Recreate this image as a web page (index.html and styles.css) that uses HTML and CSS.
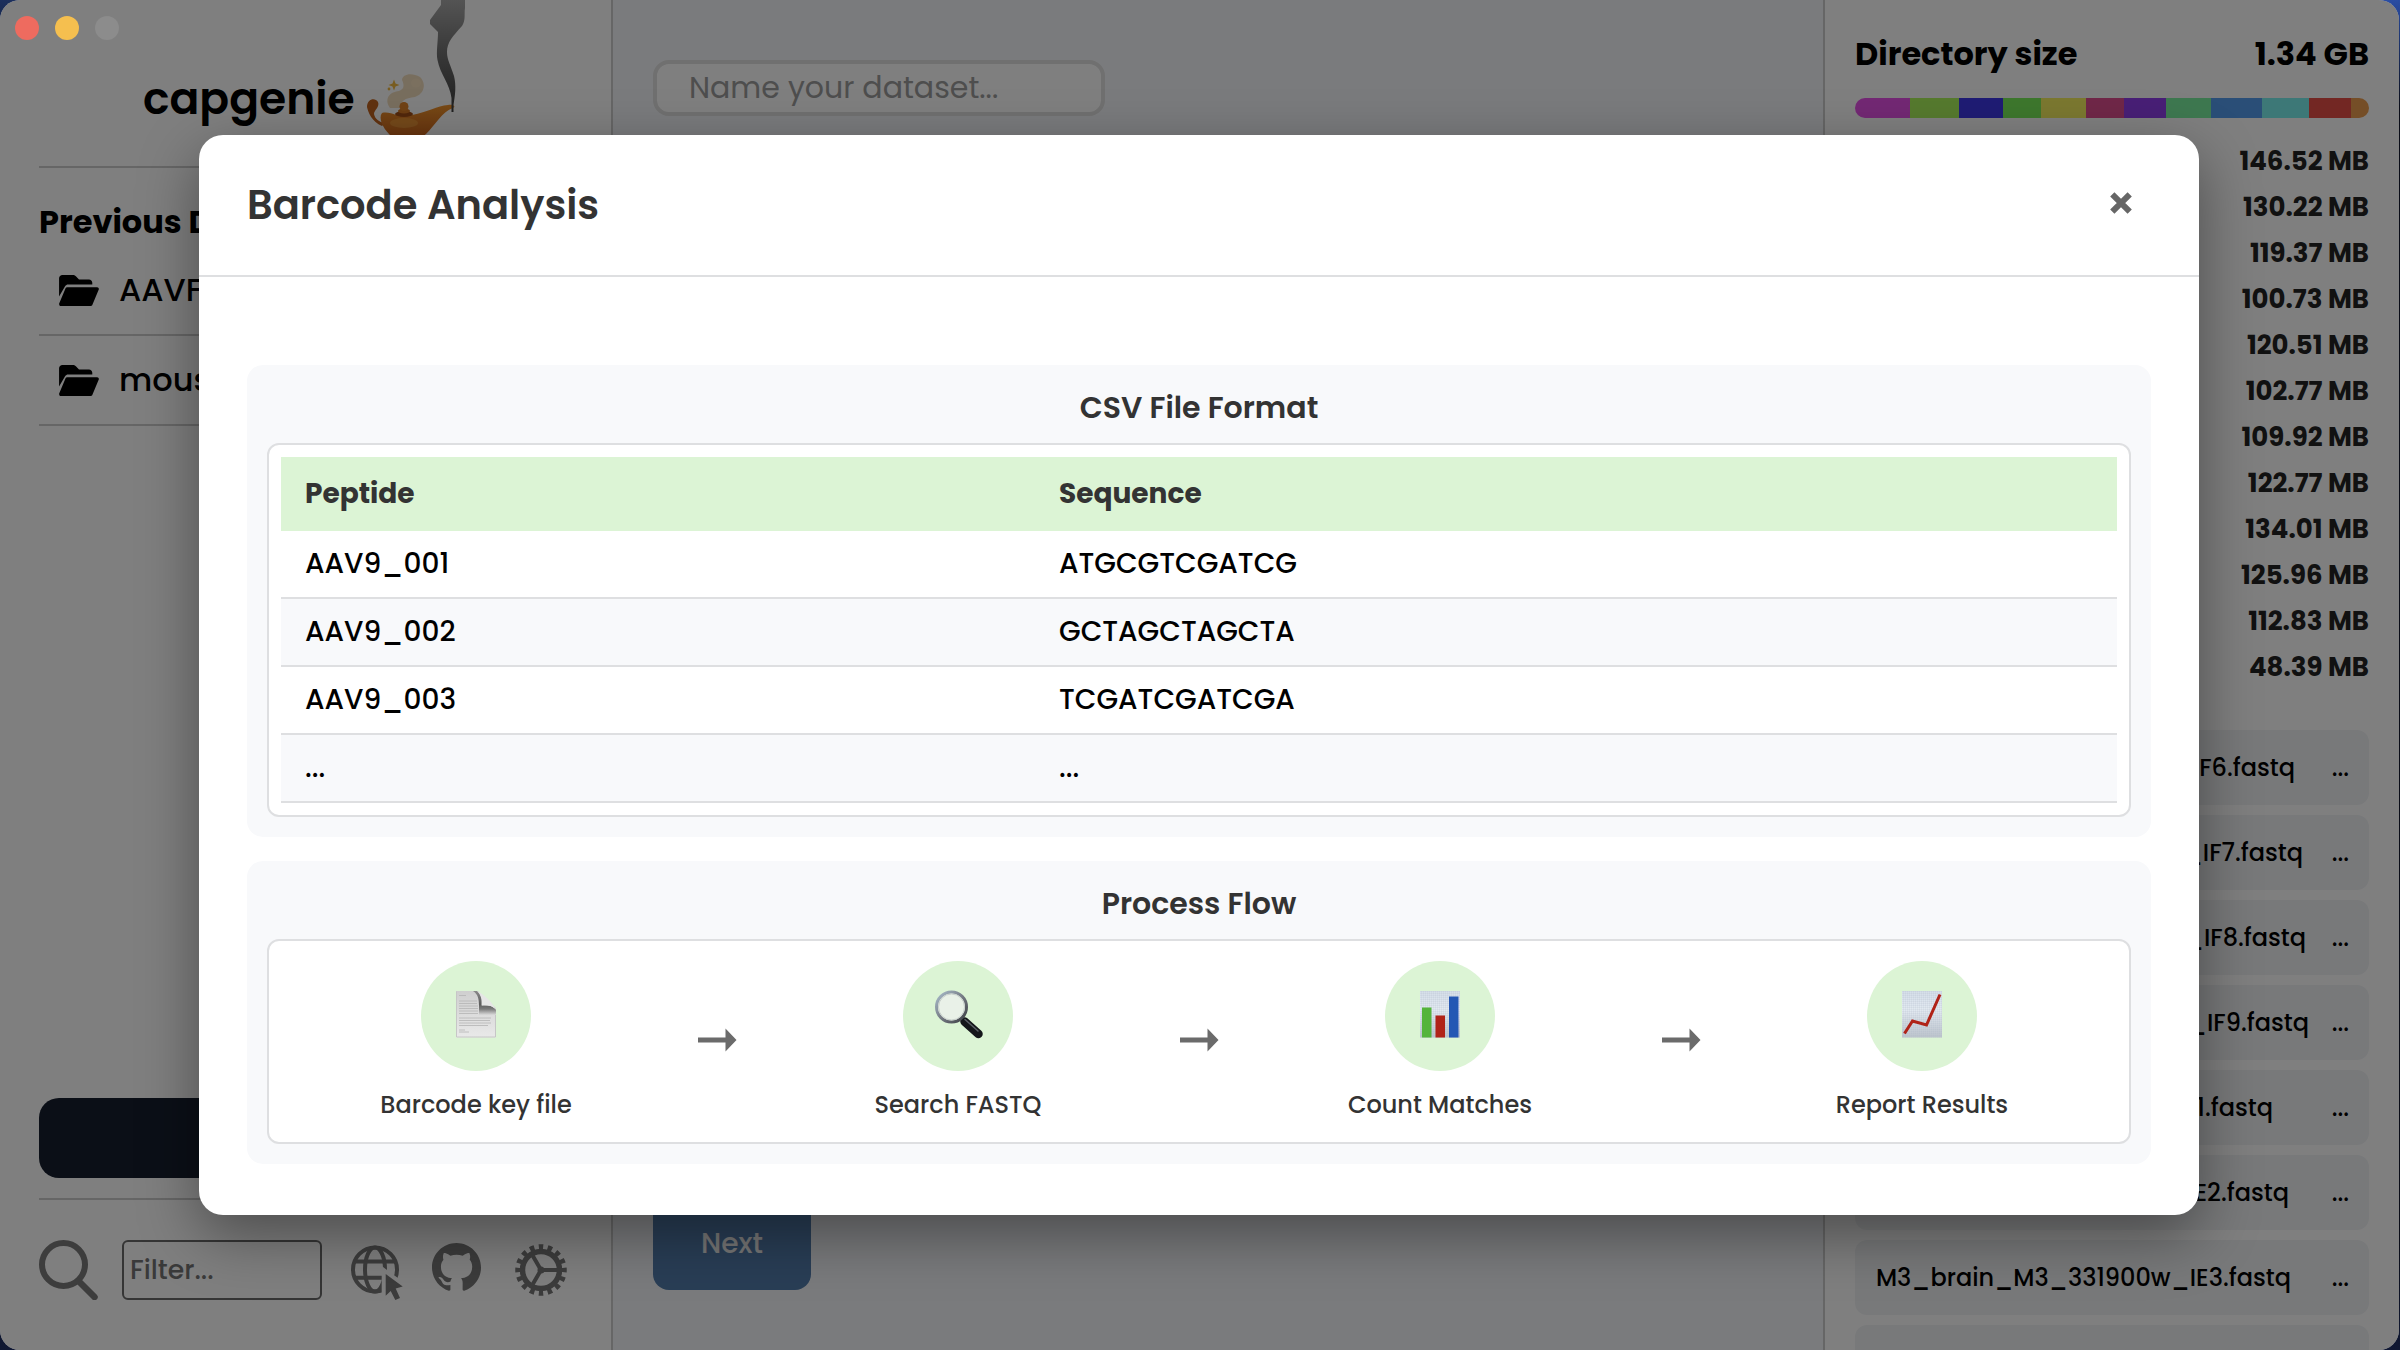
FILE: index.html
```html
<!DOCTYPE html>
<html lang="en">
<head>
<meta charset="utf-8">
<title>capgenie</title>
<link rel="stylesheet" href="styles.css">
</head>
<body>
<svg class="defs" width="0" height="0" aria-hidden="true">
  <defs>
    <linearGradient id="smoke" x1="0" y1="0" x2="0" y2="1"><stop offset="0" stop-color="#a8a8a8"/><stop offset=".5" stop-color="#6e6e6e"/><stop offset="1" stop-color="#404040"/></linearGradient>
    <linearGradient id="brass" x1="0" y1="0" x2="0" y2="1"><stop offset="0" stop-color="#f0942c"/><stop offset="1" stop-color="#c8601c"/></linearGradient>
    <linearGradient id="paper" x1="0" y1="0" x2="0" y2="1"><stop offset="0" stop-color="#d6dfea"/><stop offset=".4" stop-color="#e3eaf2"/><stop offset="1" stop-color="#bcc3cc"/></linearGradient>
    <linearGradient id="sheet" x1="0" y1="0" x2="0" y2="1"><stop offset="0" stop-color="#cfcfcf"/><stop offset="1" stop-color="#e9e9e9"/></linearGradient>
    <linearGradient id="curl" x1="0" y1="0" x2="0" y2="1"><stop offset="0" stop-color="#8a8a8a"/><stop offset=".55" stop-color="#5c5c5c"/><stop offset=".75" stop-color="#7a7a7a"/><stop offset="1" stop-color="#dcdcdc"/></linearGradient>
    <linearGradient id="rim" x1="0" y1="0" x2="1" y2="1"><stop offset="0" stop-color="#a9bccb"/><stop offset=".5" stop-color="#777d86"/><stop offset="1" stop-color="#3a3c42"/></linearGradient>
    <pattern id="grid" width="2" height="2" patternUnits="userSpaceOnUse"><path d="M0 0H2M0 0V2" stroke="#aab6c4" stroke-width=".5" opacity=".7"/></pattern>
    <symbol id="folder" viewBox="0 0 576 448"><path d="M88.7 159.8C97.300 145 113.100 136 130.200 136H480V112c0-26.500-21.500-48-48-48H288L243 19C231 7 214.700 0 197.700 0H48C21.500 0 0 21.500 0 48V312L88.700 159.800zM116 176c-8.500 0-16.400 4.500-20.700 11.900L3 408c-6.500 12 2 40 22 40H458c8.500 0 16.400-4.500 20.700-11.900L572 212c8-16-3-36-22-36z"/></symbol>
  </defs>
</svg>

<div class="window">
  <aside class="sidebar">
    <header class="brand">
      <h1 class="brand-name">capgenie</h1>
      <svg class="brand-lamp" width="120" height="150" viewBox="10 0 120 150">
        <path d="M40 108C34 99 39 92 49 91C55 89 54 84 52 80C52 74 62 72 70 77C77 84 74 94 65 97C55 98 50 101 51 108z" fill="#e8c491" opacity=".6"/>
        <ellipse cx="66" cy="83" rx="5" ry="4.500" fill="#ffe6c0" opacity=".45"/>
        <path d="M44 79.500l1.500 4 4 1.500-4 1.500-1.500 4-1.500-4-4-1.500 4-1.500z" fill="#f0b840"/>
        <circle cx="39" cy="89" r="1.400" fill="#f0b840"/>
        <path d="M32 126C22 122 18 112 17 107C17 99 25 97 28 102C30 107 24 110 24 114C25 119 29 122 35 123z" fill="#c26420"/>
        <path d="M32 113C36 112 42 113 46 115H62C78 112 87 106 98 105C104 104 106 107 103 108C92 112 86 124 76 134C66 142 46 142 39 134C33 128 28 118 32 113z" fill="url(#brass)"/>
        <ellipse cx="54" cy="123" rx="14" ry="5" fill="#f2a544" opacity=".55"/>
        <ellipse cx="54" cy="114" rx="9" ry="3" fill="#a34e16"/>
        <ellipse cx="54" cy="111" rx="6" ry="2.500" fill="#d97a24"/>
        <circle cx="54" cy="106.500" r="4.500" fill="#e0842a"/>
        <path d="M91 0V5L80 20V24L88 32C88 42 86 52 87.500 60C90 74 100 84 101.500 98V112H103.500V105C105 96 106.500 86 104 76C101 66 97 60 97 52C97 42 103 36 112 26C116 20 114 14 115 8V0z" fill="url(#smoke)"/>
      </svg>
    </header>
    <h2 class="list-title">Previous Data</h2>
    <ul class="datasets">
      <li class="dataset"><svg class="folder-icon" width="40" height="31"><use href="#folder"/></svg><span>AAVF</span></li>
      <li class="dataset"><svg class="folder-icon" width="40" height="31"><use href="#folder"/></svg><span>mouse</span></li>
    </ul>
    <div class="primary-button"></div>
    <footer class="tools">
      <svg class="tool-search" width="60" height="60" viewBox="0 0 60 60" fill="none" stroke="#7a7a7a" stroke-width="6"><circle cx="24.500" cy="24.500" r="21.500"/><path d="M39.500 41L55.500 57" stroke-width="6.500" stroke-linecap="round"/></svg>
      <div class="filter">Filter...</div>
      <svg class="tool-globe" width="54" height="56" viewBox="0 0 54 56">
        <mask id="cut"><rect width="54" height="56" fill="#fff"/><path d="M35.700 29V50.700L40.700 46L45.300 55L50 53L45.700 43.500L52.700 41.500z" fill="#000" stroke="#000" stroke-width="8"/></mask>
        <g fill="none" stroke="#787878" stroke-width="4" mask="url(#cut)"><circle cx="25" cy="24.500" r="22"/><ellipse cx="25" cy="24.500" rx="10" ry="22"/><path d="M4 16.500H46M4 32.700H46"/></g>
        <path d="M35.700 29V50.700L40.700 46L45.300 55L50 53L45.700 43.500L52.700 41.500z" fill="#787878"/>
      </svg>
      <svg class="tool-github" width="49" height="49" viewBox="0 0 16 16"><path fill="#787878" d="M8 0C3.580 0 0 3.580 0 8c0 3.540 2.290 6.530 5.470 7.590.4.070.55-.17.55-.38 0-.19-.01-.82-.01-1.490-2.010.37-2.530-.49-2.690-.94-.09-.23-.48-.94-.82-1.130-.28-.15-.68-.52-.01-.53.63-.01 1.080.58 1.230.82.72 1.210 1.870.87 2.330.66.07-.52.28-.87.51-1.070-1.780-.2-3.640-.89-3.640-3.950 0-.87.31-1.590.82-2.150-.08-.2-.36-1.020.08-2.120 0 0 .67-.21 2.200.82.64-.18 1.320-.27 2-.27s1.360.09 2 .27c1.530-1.040 2.200-.82 2.200-.82.44 1.100.16 1.920.08 2.120.51.56.82 1.270.82 2.150 0 3.070-1.870 3.750-3.650 3.950.29.25.54.73.54 1.480 0 1.070-.01 1.930-.01 2.200 0 .21.15.46.55.38A8.010 8.010 0 0 0 16 8c0-4.420-3.580-8-8-8z"/></svg>
      <svg class="tool-gear" width="54" height="54" viewBox="-27 -27 54 54" fill="none" stroke="#787878">
        <circle r="18.500" stroke-width="5.500"/>
        <circle r="22.500" stroke-width="6.500" pathLength="64" stroke-dasharray="2 2" stroke-dashoffset="1"/>
        <path d="M0 0H18M0 0L-9 -15.600M0 0L-9 15.600" stroke-width="4"/><circle r="2" stroke-width="3"/>
      </svg>
    </footer>
  </aside>

  <main class="main">
    <div class="name-input">Name your dataset...</div>
    <div class="next-button">Next</div>
  </main>

  <aside class="files">
    <header class="size-head"><span>Directory size</span><span>1.34 GB</span></header>
    <div class="size-bar">
      <i style="flex-grow:55;background:#e650e8"></i><i style="flex-grow:49;background:#acf45c"></i><i style="flex-grow:44;background:#3e38e8"></i><i style="flex-grow:38;background:#7aee5a"></i><i style="flex-grow:45;background:#f6f060"></i><i style="flex-grow:38;background:#e04e90"></i><i style="flex-grow:42;background:#903eec"></i><i style="flex-grow:45;background:#7cf0a0"></i><i style="flex-grow:51;background:#549cee"></i><i style="flex-grow:47;background:#7af0ee"></i><i style="flex-grow:42;background:#e64e46"></i><i style="flex-grow:18;background:#ea9c4e"></i>
    </div>
    <ul class="sizes">
      <li>146.52 MB</li><li>130.22 MB</li><li>119.37 MB</li><li>100.73 MB</li><li>120.51 MB</li><li>102.77 MB</li><li>109.92 MB</li><li>122.77 MB</li><li>134.01 MB</li><li>125.96 MB</li><li>112.83 MB</li><li>48.39 MB</li>
    </ul>
    <ul class="file-list">
      <li class="file"><span class="file-name" style="width:420px">M3_brain_IF6.fastq</span><span>...</span></li>
      <li class="file"><span class="file-name" style="width:428px">M3_brain_IF7.fastq</span><span>...</span></li>
      <li class="file"><span class="file-name" style="width:431px">M3_brain_IF8.fastq</span><span>...</span></li>
      <li class="file"><span class="file-name" style="width:434px">M3_brain_IF9.fastq</span><span>...</span></li>
      <li class="file"><span class="file-name" style="width:398px">M3_brain_IE1.fastq</span><span>...</span></li>
      <li class="file"><span class="file-name" style="width:414px">M3_brain_IE2.fastq</span><span>...</span></li>
      <li class="file"><span class="file-name" style="width:416px">M3_brain_M3_331900w_IE3.fastq</span><span>...</span></li>
      <li class="file"></li>
    </ul>
  </aside>

  <div class="overlay">
    <section class="modal">
      <header class="modal-head">
        <h2 class="modal-title">Barcode Analysis</h2>
        <svg class="close" width="22" height="22" viewBox="0 0 22 22" stroke="#666" stroke-width="6"><path d="M2.300 2.300L19.700 19.700M19.700 2.300L2.300 19.700"/></svg>
      </header>
      <div class="modal-body">
        <section class="card">
          <h3 class="card-title">CSV File Format</h3>
          <div class="panel panel-table">
            <div class="row row-head"><span>Peptide</span><span>Sequence</span></div>
            <div class="row"><span>AAV9_001</span><span>ATGCGTCGATCG</span></div>
            <div class="row alt"><span>AAV9_002</span><span>GCTAGCTAGCTA</span></div>
            <div class="row"><span>AAV9_003</span><span>TCGATCGATCGA</span></div>
            <div class="row alt"><span>...</span><span>...</span></div>
          </div>
        </section>
        <section class="card">
          <h3 class="card-title">Process Flow</h3>
          <div class="panel panel-flow">
            <div class="step">
              <svg class="disc" width="110" height="110" viewBox="0 0 110 110">
                <path d="M35 30H57L75 47V76.500H35z" fill="url(#sheet)"/>
                <path d="M35.500 30.500V76H74.500V50" fill="none" stroke="#c6c6c6"/>
                <path d="M38 34.500H45M38 40H56M38 42.500H56M38 45H57M38 47.500H57M38 50H57M38 52.500H57M38 57H70M38 59.500H69M38 62H70M38 64.500H67M38 69H44M38 71H48" stroke="#b4b4b4" stroke-width="1" opacity=".8"/>
                <path d="M52 30C57 33 58 38 58 45V54H75V49C73 45 68 44 61 44.500C62 38 60 33 56 30z" fill="url(#curl)"/>
                <path d="M56 30C62 33 71 40 74 48C71 44.500 66 44 60.500 44.500C61 38 60 34 56 30z" fill="#e6e6e6"/>
              </svg>
              <span class="step-label">Barcode key file</span>
            </div>
            <svg class="arrow" width="40" height="24" viewBox="0 0 40 24"><path d="M1 9.500H28.500V.5L39.500 12L28.500 23.500V14.500H1z" fill="#6b6b6b"/></svg>
            <div class="step">
              <svg class="disc" width="110" height="110" viewBox="0 0 110 110">
                <path d="M61.500 60.500L75.500 73" stroke="#14161a" stroke-width="8.500" stroke-linecap="round"/>
                <path d="M62 58.500L75 70" stroke="#5a5e66" stroke-width="1.500" stroke-linecap="round"/>
                <circle cx="48.500" cy="46" r="15" fill="#e9f1e8" stroke="url(#rim)" stroke-width="3"/>
                <circle cx="48.500" cy="46" r="13" fill="none" stroke="#c7cfca" stroke-width="1"/>
              </svg>
              <span class="step-label">Search FASTQ</span>
            </div>
            <svg class="arrow" width="40" height="24" viewBox="0 0 40 24"><path d="M1 9.500H28.500V.5L39.500 12L28.500 23.500V14.500H1z" fill="#6b6b6b"/></svg>
            <div class="step">
              <svg class="disc" width="110" height="110" viewBox="0 0 110 110">
                <path d="M35 30H75V76.500H35z" fill="url(#paper)"/><path d="M35 30H75V76.500H35z" fill="url(#grid)"/>
                <path d="M37 46.500H46.500V76.500H37z" fill="#54b43c"/><path d="M50.500 54.500H60V76.500H50.500z" fill="#b02318"/><path d="M64 35.500H73.500V76.500H64z" fill="#2457b4"/>
              </svg>
              <span class="step-label">Count Matches</span>
            </div>
            <svg class="arrow" width="40" height="24" viewBox="0 0 40 24"><path d="M1 9.500H28.500V.5L39.500 12L28.500 23.500V14.500H1z" fill="#6b6b6b"/></svg>
            <div class="step">
              <svg class="disc" width="110" height="110" viewBox="0 0 110 110">
                <path d="M35 30H75V76.500H35z" fill="url(#paper)"/><path d="M35 30H75V76.500H35z" fill="url(#grid)"/>
                <path d="M37.500 72.500L45.500 60L59.500 64L73 33.500" fill="none" stroke="#b02318" stroke-width="3"/>
              </svg>
              <span class="step-label">Report Results</span>
            </div>
          </div>
        </section>
      </div>
    </section>
  </div>
  <div class="lights"><i class="light red"></i><i class="light amber"></i><i class="light grey"></i></div>
</div>
</body>
</html>
```
FILE: styles.css
```css
* { box-sizing: border-box; }
body {
  margin: 0;
  width: 2400px;
  height: 1350px;
  overflow: hidden;
  background: linear-gradient(180deg, rgba(8, 10, 20, 0) 0, #0a0d18 8%, #0a0d18 92%, #101833 100%), linear-gradient(90deg, #1c2f5c, #2a4da3);
  font-family: Poppins, Inter, "Open Sans", sans-serif;
  font-weight: 500;
  color: #000;
}
h1, h2, h3, ul { margin: 0; padding: 0; }
h1, h2, h3 { font-weight: 600; }
ul { list-style: none; }
.defs { position: absolute; }
.window {
  position: relative;
  display: grid;
  grid-template-columns: 613px 1210px 576px;
  width: 2399px;
  height: 1350px;
  border-radius: 20px;
  overflow: hidden;
  background: #fff;
}

/* sidebar */
.sidebar {
  display: flex;
  flex-direction: column;
  height: 1350px;
  padding: 0 39px;
  border-right: 2px solid #ccc;
}
.brand {
  display: flex;
  height: 168px;
  padding-left: 104px;
  border-bottom: 2px solid #ccc;
}
.brand-name {
  flex: none;
  width: 217px;
  padding-top: 70px;
  font-size: 44px;
  line-height: 58px;
}
.brand-lamp { flex: none; }
.list-title {
  margin: 34px 0 4px;
  font-size: 32px;
  line-height: 40px;
  font-weight: 700;
}
.dataset {
  display: flex;
  align-items: center;
  gap: 20px;
  height: 90px;
  padding-left: 20px;
  border-bottom: 2px solid #ccc;
  font-size: 32px;
}
.primary-button {
  height: 80px;
  margin-top: auto;
  border-radius: 20px;
  background: #161e2e;
}
.tools {
  display: flex;
  height: 152px;
  margin-top: 20px;
  padding-top: 40px;
  border-top: 2px solid #ccc;
}
.tools svg { flex: none; }
.filter {
  width: 200px;
  height: 60px;
  margin: 0 28px 0 23px;
  padding-left: 6px;
  border: 2px solid #6a6a6a;
  border-radius: 6px;
  font-size: 26.67px;
  line-height: 56px;
  color: #757575;
}
.tool-globe { margin-top: 5px; }
.tool-github { margin: 3px 0 0 28px; }
.tool-gear { margin: 3px 0 0 33px; }

/* main column */
.main {
  display: flex;
  flex-direction: column;
  justify-content: space-between;
  align-items: flex-start;
  height: 1350px;
  padding: 60px 40px;
  background: #f5f7fa;
}
.name-input {
  width: 452px;
  height: 56px;
  padding-left: 32px;
  border: 4px solid #e0e0e0;
  border-radius: 16px;
  background: #fff;
  font-size: 30px;
  font-weight: 400;
  line-height: 48px;
  color: #9c9c9c;
}
.next-button {
  width: 158px;
  height: 92px;
  border-radius: 16px;
  background: #527cac;
  font-size: 28px;
  line-height: 92px;
  text-align: center;
  color: #eee;
}

/* files column */
.files {
  height: 1350px;
  overflow: hidden;
  padding: 34px 30px 0;
  border-left: 2px solid #ccc;
}
.size-head {
  display: flex;
  justify-content: space-between;
  font-size: 32px;
  font-weight: 700;
  line-height: 40px;
}
.size-bar {
  display: flex;
  height: 20px;
  margin: 24px 0 20px;
  border-radius: 10px;
  overflow: hidden;
}
.size-bar i { flex-basis: 0; }
.sizes li {
  font-size: 26px;
  font-weight: 700;
  line-height: 46px;
  text-align: right;
  color: #222;
}
.file-list {
  display: flex;
  flex-direction: column;
  gap: 10px;
  margin-top: 40px;
}
.file {
  display: flex;
  flex: none;
  justify-content: space-between;
  align-items: center;
  height: 75px;
  padding: 0 20px;
  border-radius: 12px;
  background: #f1f3f5;
  font-size: 24px;
}
.file-name { text-align: right; white-space: nowrap; }

/* modal */
.overlay {
  position: absolute;
  inset: 0;
  padding: 135px 200px 0 199px;
  background: rgba(0, 0, 0, .5);
}
.modal {
  height: 1080px;
  border-radius: 24px;
  background: #fff;
  box-shadow: 0 20px 60px rgba(0, 0, 0, .4);
  color: #333;
}
.modal-head {
  display: flex;
  justify-content: space-between;
  align-items: center;
  height: 142px;
  padding: 0 67px 0 48px;
  border-bottom: 2px solid #dedfe1;
}
.modal-title { font-size: 40px; }
.close { margin-top: -4px; }
.modal-body {
  display: flex;
  flex-direction: column;
  gap: 24px;
  padding: 88px 48px 0;
}
.card {
  padding: 20px;
  border-radius: 16px;
  background: #f8f9fb;
}
.card-title {
  margin-bottom: 12px;
  font-size: 30px;
  line-height: 46px;
  text-align: center;
}
.panel {
  border: 2px solid #dedfe1;
  border-radius: 12px;
  background: #fff;
}
.panel-table { padding: 12px; }
.row {
  display: grid;
  grid-template-columns: 754px 1fr;
  align-items: center;
  height: 68px;
  border-bottom: 2px solid #dedfe1;
  font-size: 28px;
  color: #000;
}
.row span { padding-left: 24px; }
.row-head {
  height: 74px;
  border: 0;
  background: #dcf4d5;
  font-weight: 700;
  color: #333;
}
.alt { background: #f8f9fb; }
.panel-flow {
  display: flex;
  justify-content: space-between;
  align-items: center;
  padding: 20px;
}
.step {
  display: flex;
  flex-direction: column;
  align-items: center;
  gap: 16px;
  width: 374px;
}
.disc { border-radius: 50%; background: #dcf4d5; }
.arrow { margin-top: -3px; }
.step-label {
  font-size: 24px;
  line-height: 35px;
}

/* window controls */
.lights {
  position: absolute;
  top: 16px;
  left: 15px;
  display: flex;
  gap: 16px;
}
.light { width: 24px; height: 24px; border-radius: 50%; }
.red { background: #ee6b5f; }
.amber { background: #f5bf4f; }
.grey { background: #8c8c8c; }
```
